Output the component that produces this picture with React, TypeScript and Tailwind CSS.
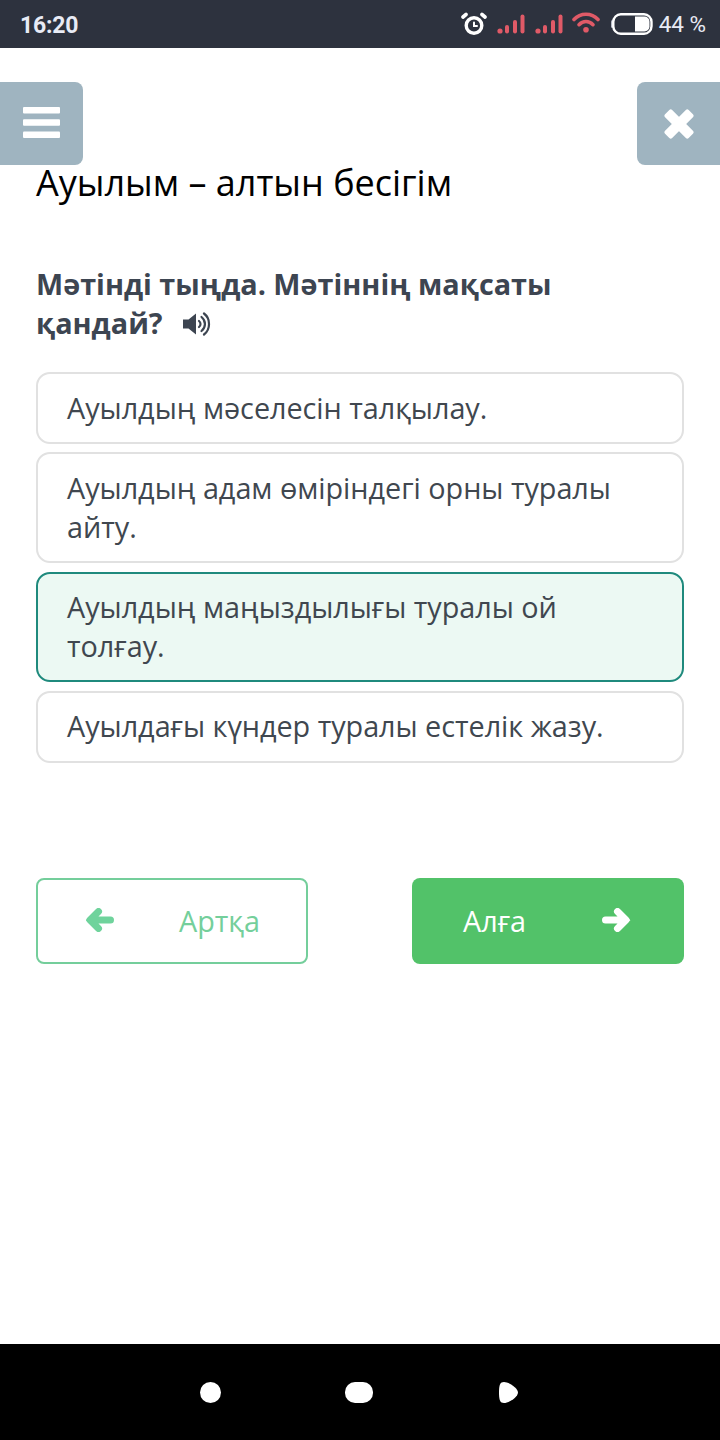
import React from 'react';

const options = [
  { id: 1, text: 'Ауылдың мәселесін талқылау.', selected: false },
  { id: 2, text: 'Ауылдың адам өміріндегі орны туралы айту.', selected: false },
  { id: 3, text: 'Ауылдың маңыздылығы туралы ой толғау.', selected: true },
  { id: 4, text: 'Ауылдағы күндер туралы естелік жазу.', selected: false },
];

const SignalIcon: React.FC = () => (
  <svg className="w-7 h-5" viewBox="0 0 28 20" fill="#e05a67">
    <circle cx="3" cy="17" r="2.6" />
    <rect x="8" y="11" width="4" height="8.5" rx="2" />
    <rect x="16" y="6" width="4" height="13.5" rx="2" />
    <rect x="23.5" y="0.5" width="4" height="19" rx="2" />
  </svg>
);

const StatusBar: React.FC = () => (
  <div className="h-12 shrink-0 bg-[#2d323e] pl-5 pr-[14px] flex items-center justify-between font-['Roboto',sans-serif] text-[#e8ebf5]">
    <span className="text-[23px] leading-none font-bold pt-[3px] tracking-[-0.2px]">16:20</span>
    <div className="flex items-center">
      <svg className="w-[26px] h-6 mr-[10px]" viewBox="0 0 26 24" fill="none" stroke="#fff" strokeLinecap="round">
        <circle cx="13" cy="13.5" r="7.8" strokeWidth="3.4" />
        <path d="M13 10.5v3.5h3" strokeWidth="2" />
        <path d="M2 5l3-2.5M24 5l-3-2.5" strokeWidth="3.6" />
      </svg>
      <SignalIcon />
      <div className="w-[10px]" />
      <SignalIcon />
      <svg className="w-7 h-[21px] ml-[9px] mr-[11px] mb-[3px]" viewBox="0 0 28 21" fill="none" stroke="#e05a67" strokeWidth="3.6" strokeLinecap="round">
        <path d="M2 7.5C8.500 0.400 19.500 0.400 26 7.500" />
        <path d="M7 12.700c4-4.200 10-4.200 14 0" />
        <circle cx="14" cy="17.7" r="2.8" fill="#e05a67" stroke="none" />
      </svg>
      <svg className="w-[42px] h-[22px] mr-[6px]" viewBox="0 0 42 22">
        <rect x="0" y="7" width="3" height="8" rx="1.5" fill="#b9bdc8" />
        <rect x="2.3" y="1.3" width="38.2" height="19.4" rx="7.5" fill="none" stroke="#fff" strokeWidth="2.4" />
        <path d="M24 3.500h9.500a5 5 0 0 1 5 5v5a5 5 0 0 1-5 5H24z" fill="#fff" />
      </svg>
      <span className="text-[22.5px] leading-none pt-px">44 %</span>
    </div>
  </div>
);

const App: React.FC = () => {
  return (
    <div className="h-[1440px] w-[720px] bg-white flex flex-col font-['Open_Sans',sans-serif]">
      <StatusBar />

      {/* Menu and close buttons */}
      <div className="flex justify-between pt-[34px]">
        <button className="w-[83px] h-[83px] bg-[#9fb4c0] rounded-r-lg flex items-center justify-center">
          <svg className="w-[37px] h-[31px] mb-[2px]" viewBox="0 0 37 31" fill="#fff">
            <rect width="37" height="6.5" rx="1" />
            <rect y="12.3" width="37" height="6.5" rx="1" />
            <rect y="24.5" width="37" height="6.5" rx="1" />
          </svg>
        </button>
        <button className="w-[83px] h-[83px] bg-[#9fb4c0] rounded-l-lg flex items-center justify-center">
          <svg className="w-[30px] h-[30px]" viewBox="0 0 30 30" fill="#fff">
            <rect x="-1.7" y="10" width="33.4" height="10" rx="2" transform="rotate(45 15 15)" />
            <rect x="-1.7" y="10" width="33.4" height="10" rx="2" transform="rotate(-45 15 15)" />
          </svg>
        </button>
      </div>

      <main className="flex-1 px-9">
        <h1 className="text-[36px] leading-9 text-black">Ауылым – алтын бесігім</h1>

        <h2 className="mt-[63px] text-[28.8px] leading-[39.2px] font-bold text-[#3d4551]">
          Мәтінді тыңда. Мәтіннің мақсаты
          <br />
          қандай?
          <svg className="inline-block w-7 h-6 ml-5 align-[-2px]" viewBox="0 0 28 24" fill="none" stroke="#3d4551" strokeWidth="2.2" strokeLinecap="round">
            <path d="M0 7.500h5.500L13 1.500v21L5.500 16.500H0z" fill="#3d4551" stroke="none" />
            <path d="M16 9c2 1.600 2 4.400 0 6" />
            <path d="M18.500 5c4.600 3.600 4.600 10.400 0 14" />
            <path d="M21 1.500c6.700 5 6.700 16 0 21" />
          </svg>
        </h2>

        {/* Answers */}
        <div className="mt-[30px] flex flex-col gap-[8.6px]">
          {options.map((option) => (
            <div
              key={option.id}
              className={`border-2 rounded-[14px] px-[29px] pt-[13.4px] pb-[14.9px] text-[28.8px] leading-[39.2px] tracking-[-0.03px] text-[#40474f] ${
                option.selected ? 'border-[#1f8a7d] bg-[#ecf9f3]' : 'border-[#e1e1e1] bg-white'
              }`}
            >
              {option.text}
            </div>
          ))}
        </div>

        {/* Navigation */}
        <div className="mt-[115px] flex justify-between text-[28.8px] leading-[39px]">
          <button className="w-[272px] h-[86px] border-2 border-[#74ce9b] rounded-lg pl-[47px] pr-[46px] pb-px flex items-center justify-between text-[#74cf9b]">
            <svg className="w-[29px] h-6" viewBox="0 0 29 24" fill="none" stroke="#6fd39c" strokeWidth="7" strokeLinecap="round" strokeLinejoin="round">
              <path d="M13.500 3.500L5 12l8.500 8.500M6 12h19.500" />
              <path d="M1.500 12l5-5v10z" fill="#6fd39c" strokeWidth="1" />
            </svg>
            <span>Артқа</span>
          </button>
          <button className="w-[272px] h-[86px] bg-[#52c269] rounded-lg pl-[51px] pr-[53px] pb-px flex items-center justify-between text-white">
            <span>Алға</span>
            <svg className="w-[29px] h-6" viewBox="0 0 29 24" fill="none" stroke="#fff" strokeWidth="7" strokeLinecap="round" strokeLinejoin="round">
              <path d="M15.500 3.500L24 12l-8.500 8.500M23 12H3.500" />
              <path d="M27.500 12l-5-5v10z" fill="#fff" strokeWidth="1" />
            </svg>
          </button>
        </div>
      </main>

      {/* System navigation bar */}
      <div className="h-24 shrink-0 bg-black flex items-center pl-[200px]">
        <div className="w-[21px] h-[21px] rounded-full bg-white" />
        <div className="w-7 h-[21px] ml-[124px] rounded-[10px] bg-white" />
        <svg className="w-5 h-[21px] ml-[126px]" viewBox="0 0 20 21" fill="#fff">
          <path d="M0 10.500C0 3 1 0 5 0c5 0 14 6 14 10.500S10 21 5 21c-4 0-5-3-5-10.500z" />
        </svg>
      </div>
    </div>
  );
};

export default App;
